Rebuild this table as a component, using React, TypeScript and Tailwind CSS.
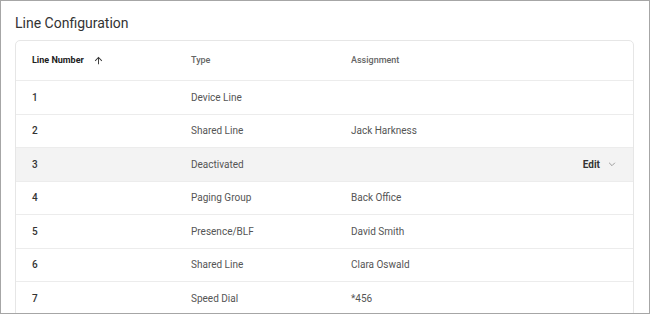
import { FC } from "react";

const rows = [
  { num: "1", type: "Device Line", assignment: "" },
  { num: "2", type: "Shared Line", assignment: "Jack Harkness" },
  { num: "3", type: "Deactivated", assignment: "", active: true },
  { num: "4", type: "Paging Group", assignment: "Back Office" },
  { num: "5", type: "Presence/BLF", assignment: "David Smith" },
  { num: "6", type: "Shared Line", assignment: "Clara Oswald" },
  { num: "7", type: "Speed Dial", assignment: "*456" },
];

const ArrowUp = () => (
  <svg width="11" height="11" viewBox="0 0 24 24" fill="#333">
    <path d="M4 12l1.41 1.41L11 7.83V20h2V7.83l5.58 5.59L20 12l-8-8-8 8z" />
  </svg>
);

const Chevron = () => (
  <svg width="10" height="10" viewBox="0 0 24 24" fill="none" stroke="#8a8a8a" strokeWidth="2">
    <path d="M5 9l7 7 7-7" />
  </svg>
);

const App: FC = () => {
  return (
    <div
      className="w-[650px] h-[314px] overflow-hidden bg-white border border-[#a6a6a6] pt-[12px] pl-[14px] pr-[15px]"
      style={{ fontFamily: "Roboto, 'Liberation Sans', sans-serif" }}
    >
      <h1 className="text-[14px] leading-[20px] text-[#333] mb-[7px]">
        Line Configuration
      </h1>
      <div className="border border-[#e6e6e6] rounded-[5px]">
        <div className="grid grid-cols-[159px_160px_1fr] items-center h-[40px] border-b border-[#ececec] pl-4 text-[9px]">
          <div className="flex items-center gap-[9px] font-bold text-[#222]">
            <span>Line Number</span>
            <ArrowUp />
          </div>
          <div className="font-medium text-[#666]">Type</div>
          <div className="font-medium text-[#666]">Assignment</div>
        </div>
        {rows.map((row) => (
          <div
            key={row.num}
            className={`grid grid-cols-[159px_160px_1fr] items-center h-[33.5px] border-b border-[#ececec] pl-4 pr-4 text-[10px] ${
              row.active ? "bg-[#f3f3f3]" : ""
            }`}
          >
            <div className="font-medium text-[#333]">{row.num}</div>
            <div className="text-[#555]">{row.type}</div>
            <div className="flex items-center justify-between">
              <span className="text-[#555]">{row.assignment}</span>
              {row.active && (
                <div className="flex items-center gap-[7px]">
                  <span className="font-bold text-[#333]">Edit</span>
                  <Chevron />
                </div>
              )}
            </div>
          </div>
        ))}
      </div>
    </div>
  );
};

export default App;
